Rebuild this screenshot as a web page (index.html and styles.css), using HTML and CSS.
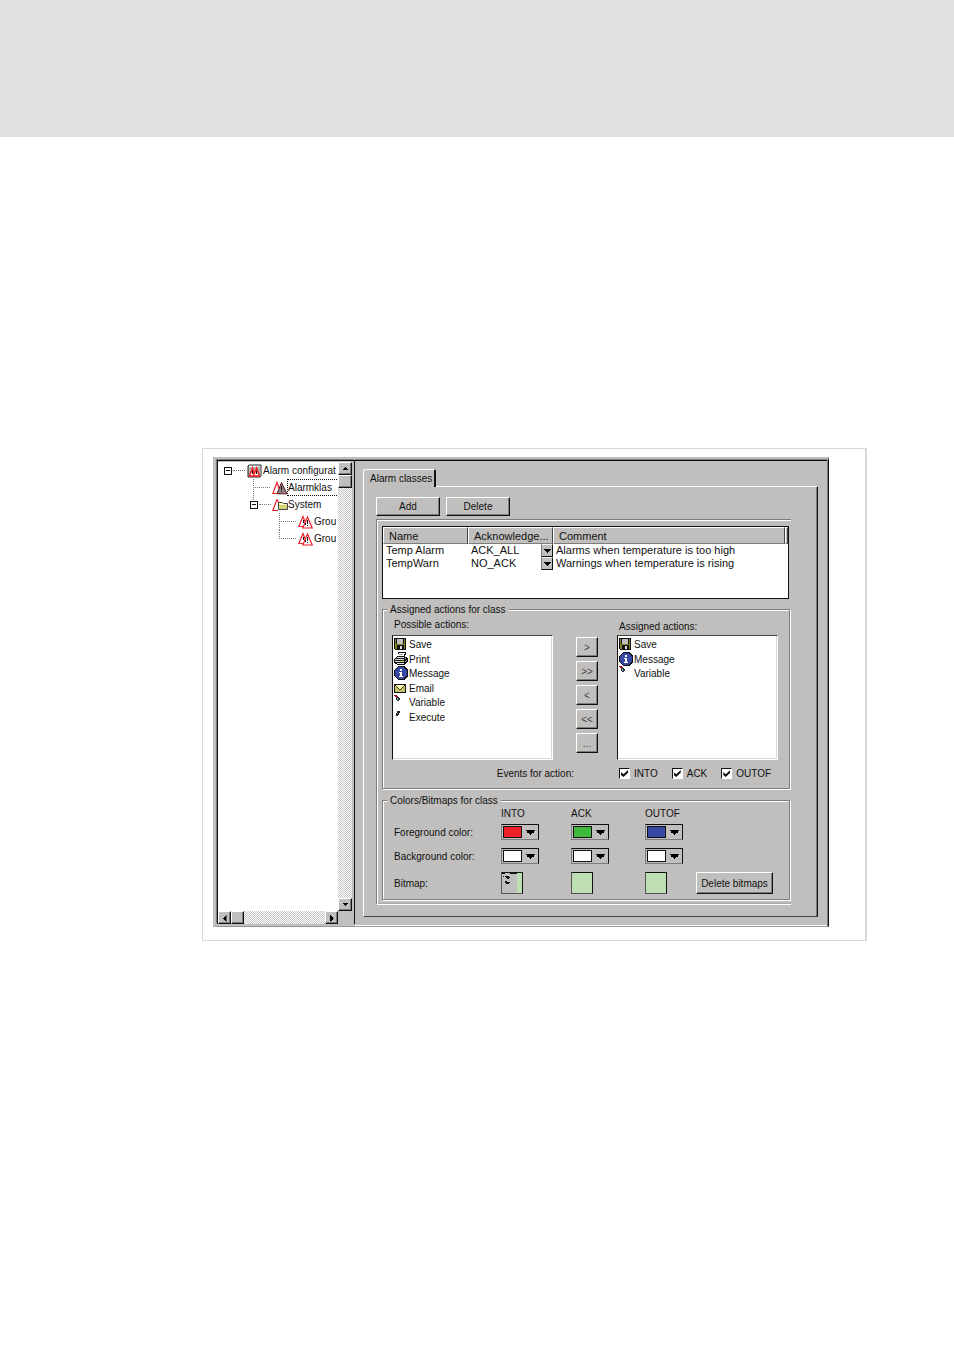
FILE: index.html
```html
<!DOCTYPE html>
<html lang="en">
<head>
<meta charset="utf-8">
<title>Alarm configuration</title>
<link rel="stylesheet" href="styles.css">
</head>
<body>
<svg class="defs" aria-hidden="true">
  <symbol id="down" viewBox="0 0 7 4"><path d="M0 0h7v1h-1v1h-1v1h-1v1h-1v-1h-1v-1h-1v-1h-1z"/></symbol>
  <symbol id="alarm" viewBox="0 0 16 14">
    <path d="M5 1.500L.8 11.500H9z" fill="#fff" stroke="#ee2028" stroke-width="1.200"/>
    <path d="M9.500 2L4.800 13H14.200z" fill="#fff" stroke="#ee2028" stroke-width="1.200"/>
    <path d="M9 5h1v4h-1zM9 10h1v1h-1zM5 5h1v3h-1zM7 8h1v2h-1z" fill="#111"/>
  </symbol>
  <symbol id="save" viewBox="0 0 12 12">
    <path d="M0 0h12v12H1L0 11z" fill="#111"/>
    <path d="M1 1h1v10h-1zM2 6h8v1h-8zM10 1h1v10h-1zM2 7h1v4h-1z" fill="#808024"/>
    <path d="M3 1h6v5h-6z" fill="#c0bfbd"/><path d="M6 8h2v3h-2z" fill="#ddd"/>
  </symbol>
  <symbol id="info" viewBox="0 0 14 14">
    <path d="M4 0h6l4 4v6l-4 4H4L0 10V4z" fill="#111"/>
    <path d="M4.500 1h5l3.500 3.500v5L9.500 13h-5L1 9.500v-5z" fill="#3749a5"/>
    <path d="M6 3h2v2H6zM5 6h3v4h1v1H5v-1h1V7H5z" fill="#fff"/>
  </symbol>
  <symbol id="variable" viewBox="0 0 7 8">
    <path d="M0 0h3v1h1v2h-2v-1h-1v-1h-1z" fill="#a5152a"/>
    <path d="M3 2h2v1h1v2h-1v1h-2v-1h-1v-2h1z" fill="#333"/>
    <path d="M3 3h1v2h-1z" fill="#4cc"/>
  </symbol>
</svg>
<header class="page-head"></header>
<main class="figure">
  <div class="app">
    <nav class="side" aria-label="Alarm tree">
      <ul class="tree">
        <li><button class="toggle" aria-label="Collapse"></button><i class="dots lead"></i>
          <svg class="tree-icon" viewBox="0 0 16 14"><path d="M1 2h12v11H1z" fill="#b5b4b2"/><path d="M1 2l1-1h12v11l-1 1H1z" fill="none" stroke="#222"/><path d="M2 2h10v1h-10z" fill="#fff"/><path d="M5.500 4L2.500 12H7.500zM9.500 4L6.500 12H12.500z" fill="#fff" stroke="#ee2028" stroke-width="1.500"/><path d="M5 7h1v3h-1zM9 7h1v3h-1z" fill="#111"/></svg><span>Alarm configurat</span></li>
        <li class="level-1 stem"><i class="dots long"></i>
          <svg class="tree-icon" viewBox="0 0 16 14"><path d="M5 1.500L.8 12.500H9z" fill="#fff" stroke="#ee2028" stroke-width="1.200"/><path d="M9.500 1.500L5 12.800H15z" fill="#978181" stroke="#5b1720"/><path d="M9 5h1v4h-1zM9 10h1v1h-1z" fill="#111"/></svg><span class="focus">Alarmklas</span></li>
        <li class="level-1"><button class="toggle" aria-label="Collapse"></button><i class="dots short"></i>
          <svg class="tree-icon" viewBox="0 0 16 14"><path d="M5 1.500L.8 12.500H6M5 1.500L7 5" fill="#fff" stroke="#ee2028" stroke-width="1.200"/><path d="M6.500 4.500h4l1 1h4v6h-9z" fill="#d9d678" stroke="#444"/><path d="M7 5h3v1h4v1H7z" fill="#fffcc0"/></svg><span>System</span></li>
        <li class="level-2 stem"><i class="dots long"></i><svg class="tree-icon"><use href="#alarm"/></svg><span>Grou</span></li>
        <li class="level-2 stem last"><i class="dots long"></i><svg class="tree-icon"><use href="#alarm"/></svg><span>Grou</span></li>
      </ul>
      <div class="scroll vertical">
        <button class="bevel scroll-btn" aria-label="Scroll up"><svg class="arrow small up"><use href="#down"/></svg></button>
        <div class="bevel thumb"></div>
        <button class="bevel scroll-btn end" aria-label="Scroll down"><svg class="arrow small"><use href="#down"/></svg></button>
      </div>
      <div class="scroll horizontal">
        <button class="bevel scroll-btn" aria-label="Scroll left"><svg class="arrow left"><use href="#down"/></svg></button>
        <div class="bevel thumb"></div>
        <button class="bevel scroll-btn end" aria-label="Scroll right"><svg class="arrow right"><use href="#down"/></svg></button>
      </div>
    </nav>
    <section class="panel">
      <div role="tablist"><button class="tab" role="tab" aria-selected="true">Alarm classes</button></div>
      <div class="sheet" role="tabpanel">
        <div class="toolbar"><button class="bevel cmd">Add</button><button class="bevel cmd">Delete</button></div>
        <div class="group">
          <div class="classes">
            <table>
              <colgroup><col class="c-name"><col class="c-ack"><col><col class="c-end"></colgroup>
              <thead><tr><th>Name</th><th>Acknowledge...</th><th>Comment</th><th></th></tr></thead>
              <tbody>
                <tr><td>Temp Alarm</td><td><div class="combo"><select aria-label="Acknowledgement of Temp Alarm"><option>ACK_ALL</option><option>NO_ACK</option></select><span class="drop"><svg class="arrow"><use href="#down"/></svg></span></div></td><td colspan="2">Alarms when temperature is too high</td></tr>
                <tr><td>TempWarn</td><td><div class="combo"><select aria-label="Acknowledgement of TempWarn"><option>NO_ACK</option><option>ACK_ALL</option></select><span class="drop"><svg class="arrow"><use href="#down"/></svg></span></div></td><td colspan="2">Warnings when temperature is rising</td></tr>
              </tbody>
            </table>
          </div>
          <fieldset class="actions">
            <legend>Assigned actions for class</legend>
            <div class="action-grid">
              <div>
                <h2 id="possible">Possible actions:</h2>
                <ul class="list" aria-labelledby="possible">
                  <li><svg class="i12"><use href="#save"/></svg>Save</li>
                  <li><svg class="i14" viewBox="0 0 14 14"><path d="M4 0h8v1l-1 4h2v1h1v4h-1v1h-1v1h-1v1H3v-1H1v-1H0V7h1V6h1V5h1V4h1z" fill="#111"/><path d="M5 1h6l-1 3H4z" fill="#fff"/><path d="M5 2h4v1H5z" fill="#999"/><path d="M3 5h7v1H2zM1 7h9v1H1zM1 9h9v1H1zM3 11h7v1H3z" fill="#e0dfdd"/><path d="M11 6h1v1h-1zM12 8h1v1h-1zM11 9h1v1h-1z" fill="#aaa"/><path d="M6 9h3v1H6z" fill="#e6df2e"/></svg>Print</li>
                  <li><svg class="i14"><use href="#info"/></svg>Message</li>
                  <li><svg class="i12" viewBox="0 0 12 12"><path d="M0 2h12v9H0z" fill="#111"/><path d="M1 3h10v7H1z" fill="#c5c26b"/><path d="M2 3h8v1H9v1H8v1H7v1H5V6H4V5H3V4H2z" fill="#fffbb8"/><path d="M1 3h1v1h1v1h1v1h1v1h2V6h1V5h1V4h1V3h1v1h-1v1H9v1H8v1H7v1H5V7H4V6H3V5H2V4H1z" fill="#3d3d12"/></svg>Email</li>
                  <li><svg class="i7"><use href="#variable"/></svg>Variable</li>
                  <li><svg class="i7" viewBox="0 0 7 8"><path d="M3 1h3v2h-1v2h-1v1h-2v-3h1z" fill="#222"/><path d="M3 3h1v1h-1z" fill="#99963b"/></svg>Execute</li>
                </ul>
              </div>
              <div class="moves">
                <button class="bevel">&gt;</button><button class="bevel">&gt;&gt;</button><button class="bevel">&lt;</button><button class="bevel">&lt;&lt;</button><button class="bevel">...</button>
              </div>
              <div>
                <h2 id="assigned" class="lower">Assigned actions:</h2>
                <ul class="list" aria-labelledby="assigned">
                  <li><svg class="i12"><use href="#save"/></svg>Save</li>
                  <li><svg class="i14"><use href="#info"/></svg>Message</li>
                  <li><svg class="i7"><use href="#variable"/></svg>Variable</li>
                </ul>
              </div>
              <div class="events-label">Events for action:</div>
              <div class="events">
                <label><input type="checkbox" checked>INTO</label><label><input type="checkbox" checked>ACK</label><label><input type="checkbox" checked>OUTOF</label>
              </div>
            </div>
          </fieldset>
          <fieldset class="colors">
            <legend>Colors/Bitmaps for class</legend>
            <div class="color-grid">
              <span></span><span class="col-head">INTO</span><span class="col-head">ACK</span><span class="col-head">OUTOF</span><span></span>
              <span>Foreground color:</span>
              <button class="picker" aria-label="Foreground INTO"><i class="swatch red"></i><svg class="arrow big"><use href="#down"/></svg></button>
              <button class="picker" aria-label="Foreground ACK"><i class="swatch green"></i><svg class="arrow big"><use href="#down"/></svg></button>
              <button class="picker" aria-label="Foreground OUTOF"><i class="swatch blue"></i><svg class="arrow big"><use href="#down"/></svg></button><span></span>
              <span>Background color:</span>
              <button class="picker" aria-label="Background INTO"><i class="swatch"></i><svg class="arrow big"><use href="#down"/></svg></button>
              <button class="picker" aria-label="Background ACK"><i class="swatch"></i><svg class="arrow big"><use href="#down"/></svg></button>
              <button class="picker" aria-label="Background OUTOF"><i class="swatch"></i><svg class="arrow big"><use href="#down"/></svg></button><span></span>
              <span>Bitmap:</span>
              <button class="bitmap" aria-label="Bitmap INTO"><svg viewBox="0 0 20 20"><path d="M0 0h15v20H0z" fill="#c0bfbd"/><path d="M0 0h3v1H0zM8 0h7v1H8zM1 3h1v1H1zM3 3h4v1h1v1H7v1H5V5H4V4H3zM3 8h2v1h3v1H7v1H4v-1H3z" fill="#111"/></svg></button>
              <button class="bitmap" aria-label="Bitmap ACK"></button>
              <button class="bitmap" aria-label="Bitmap OUTOF"></button>
              <button class="bevel delete-bitmaps">Delete bitmaps</button>
            </div>
          </fieldset>
        </div>
      </div>
    </section>
  </div>
</main>
</body>
</html>
```
FILE: styles.css
```css
* { box-sizing: border-box; }
:root { --face: #c0bfbd; --shade: #7d7d7b; --ink: #111; --ui: "Liberation Sans", Arial, sans-serif; }
body { margin: 0; background: #fff; color: var(--ink); font: 10px/13px var(--ui); }
button, select { margin: 0; padding: 0; border: 0; color: inherit; font: inherit; background: none; }
ul { margin: 0; padding: 0; list-style: none; }
svg { display: block; flex: none; shape-rendering: crispEdges; }
.defs { position: absolute; width: 0; height: 0; }
.page-head { height: 137px; background: #e0e0e0; }
.figure { margin: 311px 87px 40px 202px; padding: 8px 36px 13px 10px; border: 1px solid #d8d8d8; border-right-width: 2px; }

.app { display: grid; grid-template-columns: 139px minmax(0, 1fr); background: var(--face); border-style: solid; border-color: var(--face) var(--ink) #999 var(--face); border-width: 3px 1px 1px 3px; box-shadow: inset -1px 0 var(--shade); }
.bevel { background: var(--face); border: 1px solid; border-color: #fff var(--ink) var(--ink) #fff; box-shadow: inset -1px -1px var(--shade); text-align: center; }

.side { display: grid; grid-template-columns: minmax(0, 1fr) 14px; grid-template-rows: minmax(0, 1fr) 13px; margin: 0 0 2px 1px; padding: 1px 2px 0 0; border: 1px solid var(--ink); border-bottom: 0; box-shadow: -1px -1px var(--shade); }
.tree { background: #fff; overflow: hidden; }
.tree li { position: relative; display: flex; align-items: center; height: 17px; padding-left: 6px; white-space: nowrap; }
.tree li > * { flex: none; }
.tree .level-1 { padding-left: 32px; }
.tree .level-1.stem { padding-left: 35px; }
.tree .level-2 { padding-left: 61px; }
.stem::before { content: ""; position: absolute; left: 35px; top: 0; height: 21px; border-left: 1px dotted #777; }
.stem.level-2::before { left: 61px; height: 17px; }
.stem.last::before { height: 9px; }
.toggle { display: grid; place-items: center; width: 8px; height: 8px; border: 1px solid var(--ink); background: #fff; }
.toggle::before { content: ""; width: 4px; height: 1px; background: var(--ink); }
.dots { border-top: 1px dotted #777; }
.lead { width: 12px; margin: 0 2px 0 1px; }
.long { width: 17px; margin-right: 2px; }
.short { width: 12px; margin: 0 1px; }
.tree-icon { width: 16px; height: 14px; shape-rendering: auto; }
.focus { outline: 1px dotted var(--ink); width: 60px; padding: 1px 0; }

.scroll { display: flex; background: repeating-conic-gradient(#fff 0 25%, #c6c5c3 0 50%) 0 0 / 2px 2px; }
.vertical { flex-direction: column; }
.horizontal { grid-column: 1; }
.scroll-btn { display: grid; place-items: center; width: 13px; height: 13px; flex: none; }
.thumb { width: 13px; height: 13px; flex: none; }
.vertical > * { width: 14px; }
.vertical .end { margin-top: auto; }
.horizontal .end { margin-left: auto; }
.arrow { width: 7px; height: 4px; }
.small { width: 5px; height: 3px; }
.big { width: 9px; height: 5px; }
.up { transform: rotate(180deg); }
.left { transform: rotate(90deg); }
.right { transform: rotate(-90deg); }

.panel { padding: 8px 9px 8px 8px; margin-right: 1px; border-bottom: 1px solid #fff; border-top: 1px solid var(--ink); box-shadow: 0 -1px var(--shade); }
.tab { position: relative; display: block; height: 18px; padding: 0 2px 0 6px; margin-bottom: -1px; background: var(--face); border: 1px solid #fff; border-bottom: 0; border-right: 2px solid var(--ink); border-radius: 3px 2px 0 0; }
.sheet { padding: 10px 26px 11px 12px; border: 1px solid #fff; border-right-color: var(--ink); border-bottom-color: #444; box-shadow: inset -1px 0 var(--shade); }
.toolbar { display: flex; gap: 6px; margin-bottom: 3px; }
.cmd { width: 64px; height: 19px; }
.group { padding: 6px 1px 4px 5px; border: 1px solid var(--shade); border-right: 0; border-bottom-color: #fff; box-shadow: inset 1px 1px #fff, inset 0 -1px #aaa; }

.classes { min-height: 73px; margin-right: 1px; background: #fff; border: 1px solid var(--ink); font-size: 11px; }
table { width: 100%; table-layout: fixed; border-collapse: separate; border-spacing: 0; }
.c-name { width: 85px; }
.c-ack { width: 85px; }
.c-end { width: 3px; }
th { height: 17px; padding: 1px 0 0 5px; font-weight: normal; text-align: left; background: var(--face); border: 1px solid #fff; border-right-color: #444; border-bottom-color: var(--shade); white-space: nowrap; overflow: hidden; }
th:last-child { padding: 0; }
td { height: 13px; padding: 0 0 0 3px; white-space: nowrap; }
.combo { display: grid; align-items: center; }
.combo > * { grid-area: 1 / 1; }
.combo select { appearance: none; height: 13px; }
.drop { justify-self: end; display: grid; place-items: center; width: 12px; height: 13px; background: var(--face); border: 1px solid; border-color: #eee var(--ink) var(--ink) var(--shade); pointer-events: none; }

fieldset { min-width: 0; margin: 0; padding: 0; border: 1px solid var(--shade); box-shadow: 1px 1px #fff, inset 1px 1px #fff; }
legend { margin-left: -5px; padding: 0 3px; background: var(--face); }
h2 { margin: 0; padding: 2px 2px 0; height: 19px; font: inherit; }
h2.lower { padding-top: 4px; }
.actions { margin-top: 4px; padding: 0 11px 8px 9px; }
.action-grid { display: grid; grid-template-columns: minmax(0, 1fr) 64px minmax(0, 1fr); row-gap: 7px; }
.list { height: 125px; padding: 1px; background: #fff; border: 1px solid; border-color: #444 #fff #fff var(--ink); box-shadow: inset -1px -1px #d8d8d6; }
.list li { display: grid; grid-template-columns: 15px auto; align-items: center; height: 14px; margin-bottom: 1px; }
.list li:nth-child(even) { margin-bottom: 0; }
.i12 { width: 12px; height: 12px; }
.i14 { width: 14px; height: 14px; }
.i7 { width: 7px; height: 8px; align-self: start; }
.moves { display: flex; flex-direction: column; gap: 4px; padding: 21px 0 0 23px; }
.moves button { width: 22px; height: 20px; color: #444; }
.events-label { grid-column: 1 / 3; padding-right: 43px; text-align: right; }
.events { display: flex; gap: 14px; padding-left: 2px; }
.events label { display: flex; align-items: center; gap: 4px; }
input { appearance: none; display: grid; place-items: center; width: 11px; height: 11px; margin: 0; background: #fff; border: 1px solid; border-color: var(--ink) #fff #fff var(--ink); }
input:checked::before { content: ""; width: 7px; height: 7px; background: var(--ink); clip-path: polygon(0 30%, 35% 60%, 100% 0, 100% 40%, 35% 100%, 0 70%); }

.colors { margin-top: 5px; padding: 0 9px 5px; }
.color-grid { display: grid; grid-template-columns: 107px 70px 74px 51px auto; grid-template-rows: 9px 16px 16px 22px; row-gap: 8px; align-items: center; justify-content: start; padding-left: 2px; }
.col-head { align-self: start; }
.picker { display: flex; align-items: center; gap: 4px; width: 38px; height: 16px; padding: 0 1px; border: 1px solid var(--ink); border-left-color: var(--shade); border-bottom-color: var(--shade); }
.swatch { width: 19px; height: 12px; border: 1px solid var(--ink); background: #fff; }
.red { background: #ee2028; }
.green { background: #3eb93e; }
.blue { background: #3749a5; }
.bitmap { width: 22px; height: 22px; background: #bddfb3; border: 1px solid var(--ink); border-left-color: #555; border-bottom-color: #555; }
.delete-bitmaps { width: 77px; height: 22px; }
```
